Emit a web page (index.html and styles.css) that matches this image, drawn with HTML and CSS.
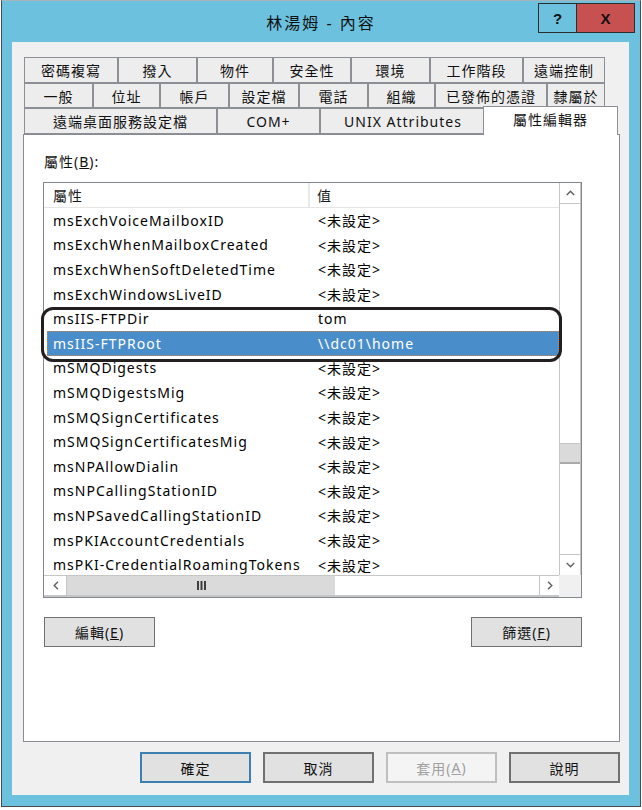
FILE: index.html
```html
<!DOCTYPE html>
<html lang="zh-Hant">
<head>
<meta charset="utf-8">
<title>林湯姆 - 內容</title>
<link rel="stylesheet" href="styles.css">
</head>
<body>
<div class="window">
  <div class="titlebar">
    <div class="title">林湯姆 - 內容</div>
    <div class="caption-btns">
      <div class="cbtn help">?</div>
      <div class="cbtn close">X</div>
    </div>
  </div>
  <div class="client">
    <div class="tabs">
      <div class="tabrow">
        <div class="tab w94">密碼複寫</div>
        <div class="tab w79">撥入</div>
        <div class="tab w76">物件</div>
        <div class="tab w78">安全性</div>
        <div class="tab w79">環境</div>
        <div class="tab w93">工作階段</div>
        <div class="tab w82">遠端控制</div>
      </div>
      <div class="tabrow">
        <div class="tab w69">一般</div>
        <div class="tab w67">位址</div>
        <div class="tab w69">帳戶</div>
        <div class="tab w70">設定檔</div>
        <div class="tab w69">電話</div>
        <div class="tab w67">組織</div>
        <div class="tab w112">已發佈的憑證</div>
        <div class="tab w58">隸屬於</div>
      </div>
      <div class="tabrow last">
        <div class="tab w193">遠端桌面服務設定檔</div>
        <div class="tab w103">COM+</div>
        <div class="tab w166">UNIX Attributes</div>
        <div class="tab sel">屬性編輯器</div>
      </div>
    </div>
    <div class="panel">
      <div class="lbl">屬性(<u>B</u>):</div>
      <div class="listview">
        <div class="lv-main">
          <div class="lv-body">
            <div class="lv-head">
              <div class="hc c1">屬性</div>
              <div class="hc c2">值</div>
            </div>
            <div class="row"><div class="c1">msExchVoiceMailboxID</div><div class="c2">&lt;未設定&gt;</div></div>
            <div class="row"><div class="c1">msExchWhenMailboxCreated</div><div class="c2">&lt;未設定&gt;</div></div>
            <div class="row"><div class="c1">msExchWhenSoftDeletedTime</div><div class="c2">&lt;未設定&gt;</div></div>
            <div class="row"><div class="c1">msExchWindowsLiveID</div><div class="c2">&lt;未設定&gt;</div></div>
            <div class="row"><div class="c1">msIIS-FTPDir</div><div class="c2">tom</div></div>
            <div class="row selected"><div class="c1">msIIS-FTPRoot</div><div class="c2">\\dc01\home</div></div>
            <div class="row"><div class="c1">mSMQDigests</div><div class="c2">&lt;未設定&gt;</div></div>
            <div class="row"><div class="c1">mSMQDigestsMig</div><div class="c2">&lt;未設定&gt;</div></div>
            <div class="row"><div class="c1">mSMQSignCertificates</div><div class="c2">&lt;未設定&gt;</div></div>
            <div class="row"><div class="c1">mSMQSignCertificatesMig</div><div class="c2">&lt;未設定&gt;</div></div>
            <div class="row"><div class="c1">msNPAllowDialin</div><div class="c2">&lt;未設定&gt;</div></div>
            <div class="row"><div class="c1">msNPCallingStationID</div><div class="c2">&lt;未設定&gt;</div></div>
            <div class="row"><div class="c1">msNPSavedCallingStationID</div><div class="c2">&lt;未設定&gt;</div></div>
            <div class="row"><div class="c1">msPKIAccountCredentials</div><div class="c2">&lt;未設定&gt;</div></div>
            <div class="row"><div class="c1">msPKI-CredentialRoamingTokens</div><div class="c2">&lt;未設定&gt;</div></div>
          </div>
          <div class="vscroll">
            <div class="sbtn up"><svg width="9" height="6" viewBox="0 0 9 6"><polyline points="0.8,5 4.5,1.2 8.2,5" fill="none" stroke="#5f5f5f" stroke-width="1.4"/></svg></div>
            <div class="vthumb"></div>
            <div class="sbtn down"><svg width="9" height="6" viewBox="0 0 9 6"><polyline points="0.8,1 4.5,4.8 8.2,1" fill="none" stroke="#5f5f5f" stroke-width="1.4"/></svg></div>
          </div>
        </div>
        <div class="lv-bottom">
          <div class="hscroll">
            <div class="hbtn left"><svg width="6" height="9" viewBox="0 0 6 9"><polyline points="5,0.8 1.2,4.5 5,8.2" fill="none" stroke="#5f5f5f" stroke-width="1.4"/></svg></div>
            <div class="hthumb"><svg width="9" height="9" viewBox="0 0 9 9"><rect x="0" y="0" width="2" height="9" fill="#3f3f3f"/><rect x="3.5" y="0" width="2" height="9" fill="#3f3f3f"/><rect x="7" y="0" width="2" height="9" fill="#3f3f3f"/></svg></div>
            <div class="htrack"></div>
            <div class="hbtn right"><svg width="6" height="9" viewBox="0 0 6 9"><polyline points="1,0.8 4.8,4.5 1,8.2" fill="none" stroke="#5f5f5f" stroke-width="1.4"/></svg></div>
          </div>
          <div class="corner"></div>
        </div>
        <div class="highlight"></div>
      </div>
      <div class="btnrow">
        <div class="btn">編輯(<u>E</u>)</div>
        <div class="btn">篩選(<u>F</u>)</div>
      </div>
    </div>
    <div class="dlg-btns">
      <div class="btn big default">確定</div>
      <div class="btn big">取消</div>
      <div class="btn big disabled">套用(<u>A</u>)</div>
      <div class="btn big">說明</div>
    </div>
  </div>
</div>
</body>
</html>
```
FILE: styles.css
```css
html, body {
  margin: 0;
  padding: 0;
  background: #ffffff;
}
body {
  font-family: "Noto Sans", "Noto Sans CJK TC", sans-serif;
  font-size: 14px;
  letter-spacing: 1px;
  color: #000;
}
.window {
  margin-left: 1px;
  width: 640px;
  height: 807px;
  box-sizing: border-box;
  border: 1px solid #4a4a4a;
  border-top-color: #a9b4b9;
  background: #6bc1de;
  display: flex;
  flex-direction: column;
}
.titlebar {
  height: 41px;
  display: grid;
  grid-template-columns: 1fr auto 1fr;
  align-items: start;
}
.title {
  grid-column: 2;
  align-self: center;
  font-size: 16px;
  letter-spacing: 2px;
  color: #111;
  margin-top: 1px;
}
.caption-btns {
  grid-column: 3;
  justify-self: end;
  display: flex;
  margin-top: 2px;
  margin-right: 5px;
}
.cbtn {
  height: 30px;
  box-sizing: border-box;
  border: 1px solid #2d2d2d;
  display: flex;
  align-items: center;
  justify-content: center;
  font-family: "Liberation Sans", sans-serif;
  font-weight: bold;
  font-size: 15px;
  letter-spacing: 0;
  color: #111;
}
.cbtn.help {
  width: 38px;
  border-right: none;
  background: #6bc1de;
}
.cbtn.close {
  width: 59px;
  background: #c75050;
}
.client {
  margin-left: 10px;
  width: 617px;
  height: 753px;
  box-sizing: border-box;
  background: #f0f0f0;
  padding: 15px 9px 0 11px;
}
.tabs {
  margin-left: 1px;
}
.tabrow {
  display: flex;
  height: 26px;
}
.tabrow:nth-child(2) {
  height: 25px;
}
.tab {
  box-sizing: border-box;
  border: 1px solid #8c8f96;
  background: #ededed;
  display: flex;
  align-items: center;
  justify-content: center;
  white-space: nowrap;
  color: #111;
}
.w58 { width: 58px; }
.w67 { width: 67px; }
.w69 { width: 69px; }
.w70 { width: 70px; }
.w76 { width: 76px; }
.w78 { width: 78px; }
.w79 { width: 79px; }
.w82 { width: 82px; }
.w93 { width: 93px; }
.w94 { width: 94px; }
.w103 { width: 103px; }
.w112 { width: 112px; }
.w166 { width: 166px; }
.w193 { width: 193px; }
.tab.sel {
  width: 135px;
  margin-left: -3px;
  margin-top: -2px;
  height: 29px;
  background: #ffffff;
  border-bottom: none;
  align-items: flex-start;
  padding-top: 2px;
  z-index: 2;
  position: relative;
}
.panel {
  width: 597px;
  height: 608px;
  box-sizing: border-box;
  border: 1px solid #898c95;
  background: #ffffff;
  padding: 0 0 0 19px;
}
.lbl {
  margin-top: 17px;
  padding-left: 1px;
  height: 20px;
  line-height: 20px;
  color: #111;
}
.listview {
  position: relative;
  margin-top: 10px;
  width: 539px;
  height: 416px;
  box-sizing: border-box;
  border: 1px solid #828790;
  background: #ffffff;
}
.lv-main {
  display: flex;
  height: 392px;
}
.lv-body {
  width: 515px;
  overflow: hidden;
}
.lv-head {
  height: 25px;
  box-sizing: border-box;
  border-bottom: 1px solid #e5e5e5;
  display: flex;
  color: #1a1a1a;
}
.hc {
  display: flex;
  align-items: center;
  box-sizing: border-box;
}
.hc.c1 {
  width: 266px;
  padding-left: 9px;
  border-right: 2px solid #e8e8e8;
}
.hc.c2 {
  padding-left: 7px;
}
.row {
  display: flex;
  align-items: center;
  height: 24.6px;
  margin-left: 3px;
  box-sizing: border-box;
  white-space: nowrap;
}
.row .c1 {
  width: 263px;
  padding-left: 6px;
  box-sizing: border-box;
}
.row .c2 {
  padding-left: 8px;
}
.row.selected {
  background: #4a8dcb;
  color: #ffffff;
  outline: 1px dotted #d0844a;
  outline-offset: -1px;
}
.vscroll {
  width: 22px;
  box-sizing: border-box;
  border-left: 1px solid #c6c6c6;
  border-right: 1px solid #c6c6c6;
  display: flex;
  flex-direction: column;
}
.sbtn {
  height: 21px;
  display: flex;
  align-items: center;
  justify-content: center;
  box-sizing: border-box;
}
.sbtn.up {
  border-bottom: 1px solid #c6c6c6;
}
.sbtn.down {
  margin-top: auto;
  border-top: 1px solid #c6c6c6;
}
.vthumb {
  margin-top: 239px;
  height: 21px;
  box-sizing: border-box;
  background: #dadada;
  border-top: 1px solid #c6c6c6;
  border-bottom: 2px solid #a9a9a9;
}
.lv-bottom {
  display: flex;
  height: 22px;
}
.hscroll {
  width: 515px;
  box-sizing: border-box;
  border-top: 1px solid #c6c6c6;
  border-bottom: 2px solid #c6c6c6;
  display: flex;
  padding-left: 2px;
}
.hbtn {
  width: 21px;
  display: flex;
  align-items: center;
  justify-content: center;
  box-sizing: border-box;
}
.hbtn.left {
  border-right: 1px solid #c6c6c6;
}
.hbtn.right {
  width: 20px;
  border-left: 1px solid #c6c6c6;
}
.hthumb {
  width: 268px;
  background: #dadada;
  display: flex;
  align-items: center;
  justify-content: center;
}
.htrack {
  flex: 1;
}
.corner {
  width: 22px;
  background: #f0f0f0;
}
.highlight {
  position: absolute;
  left: -3px;
  top: 124px;
  width: 521px;
  height: 55px;
  box-sizing: border-box;
  border: 3px solid #231f20;
  border-radius: 12px;
  pointer-events: none;
}
.btnrow {
  width: 539px;
  margin-top: 19px;
  display: flex;
  justify-content: space-between;
}
.btn {
  width: 111px;
  height: 30px;
  box-sizing: border-box;
  background: #e1e1e1;
  border: 1px solid #707070;
  display: flex;
  align-items: center;
  justify-content: center;
  color: #111;
}
.btnrow .btn:first-child {
  margin-left: 1px;
}
.dlg-btns {
  margin-top: 10px;
  display: flex;
  justify-content: flex-end;
  gap: 12px;
}
.btn.big {
  height: 31px;
  border-width: 2px;
}
.btn.default {
  border-color: #3c7fb1;
}
.btn.disabled {
  background: #f4f4f4;
  border-color: #bfbfbf;
  color: #a0a0a0;
}
```
